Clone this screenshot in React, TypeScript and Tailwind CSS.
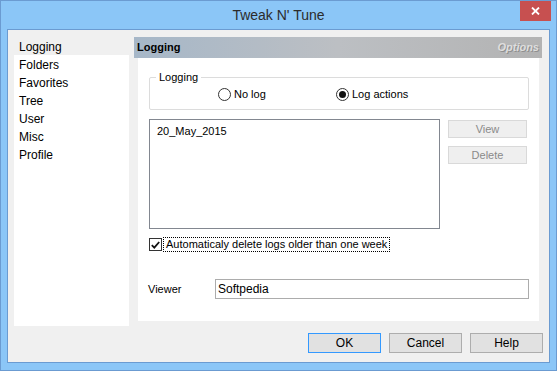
import React from 'react';

const menu = ['Logging', 'Folders', 'Favorites', 'Tree', 'User', 'Misc', 'Profile'];

const Radio: React.FC<{ checked?: boolean; label: string }> = ({ checked, label }) => (
  <div className="flex items-center gap-[3px]">
    <div className="w-[13px] h-[13px] rounded-full border border-[#333] bg-white flex items-center justify-center">
      {checked && <div className="w-[7px] h-[7px] rounded-full bg-[#111]" />}
    </div>
    <span>{label}</span>
  </div>
);

const DialogButton: React.FC<{ label: string; primary?: boolean }> = ({ label, primary }) => (
  <div
    className={`w-[73px] h-[20px] flex items-center justify-center bg-[#e1e1e1] border text-[12px] text-black ${
      primary ? 'border-[#3399ff]' : 'border-[#adadad]'
    }`}
  >
    {label}
  </div>
);

export default function App() {
  return (
    <div
      className="w-[557px] h-[371px] bg-[#8bc6f7] border border-[#6b9bd1] flex flex-col"
      style={{ fontFamily: '"Liberation Sans", Arial, sans-serif' }}
    >
      {/* title bar */}
      <div className="relative h-[28px] flex items-center justify-center">
        <span className="text-[14px] text-[#2b2b2b] pt-[1px]">Tweak N' Tune</span>
        <div className="absolute right-[5px] top-0 w-[31px] h-[20px] bg-[#c75050] flex items-center justify-center">
          <svg width="9" height="8" viewBox="0 0 9 8">
            <path d="M1 0.5 L8 7.5 M8 0.5 L1 7.5" stroke="white" strokeWidth="1.8" />
          </svg>
        </div>
      </div>

      {/* client area */}
      <div className="ml-[6px] w-[543px] h-[334px] border border-[#6b9bd1] bg-[#f0f0f0] flex flex-col">
        <div className="flex pt-[7px] pl-[6px] gap-[5px]">
          {/* side list */}
          <div className="w-[115px] h-[289px] bg-white flex flex-col text-[12px] text-black">
            {menu.map((m, i) => (
              <div key={m} className={`h-[18px] flex items-center pl-[5px] pt-[2px] ${i === 0 ? 'bg-[#f0f0f0]' : ''}`}>
                {m}
              </div>
            ))}
          </div>

          {/* page panel */}
          <div className="w-[408px] h-[284px] flex flex-col">
            <div className="h-[21px] bg-gradient-to-r from-[#a6b7c8] via-[#bcbfc3] to-[#b3b3b3] flex items-center justify-between px-[3px]">
              <span className="text-[11px] font-bold text-black">Logging</span>
              <span className="text-[11px] font-bold italic text-[#dedede] [text-shadow:1px_1px_0_#8f8f8f]">Options</span>
            </div>
            <div className="flex-1 bg-white ml-[4px] mr-[3px] pt-[19px] pl-[11px] text-[11px] text-black">
              {/* group box */}
              <div className="relative w-[380px] h-[33px] border border-[#dcdcdc] rounded-[2px]">
                <span className="absolute -top-[8px] left-[6px] bg-white px-[3px] leading-[14px]">Logging</span>
                <div className="absolute left-[68px] top-[8px]">
                  <Radio label="No log" />
                </div>
                <div className="absolute left-[186px] top-[8px]">
                  <Radio checked label="Log actions" />
                </div>
              </div>

              {/* log list + actions */}
              <div className="flex gap-[8px] mt-[9px]">
                <div className="w-[291px] h-[110px] border border-[#828790] pl-[7px] pt-[3px]">20_May_2015</div>
                <div className="flex flex-col gap-[8px] pt-[1px]">
                  <div className="w-[79px] h-[18px] bg-[#efefef] border border-[#d9d9d9] text-[#8a8a8a] flex items-center justify-center">View</div>
                  <div className="w-[79px] h-[18px] bg-[#efefef] border border-[#d9d9d9] text-[#8a8a8a] flex items-center justify-center">Delete</div>
                </div>
              </div>

              {/* auto delete */}
              <div className="flex items-center mt-[8px] h-[15px]">
                <div className="w-[13px] h-[13px] border border-[#333] bg-white flex items-center justify-center">
                  <svg width="9" height="8" viewBox="0 0 9 8">
                    <path d="M0.8 4.2 L3.3 6.6 L8.2 1" stroke="#111" strokeWidth="1.8" fill="none" />
                  </svg>
                </div>
                <span className="ml-[1px] border border-dotted border-black px-[2px] leading-[13px]">
                  Automaticaly delete logs older than one week
                </span>
              </div>

              {/* viewer */}
              <div className="flex items-center mt-[27px] -ml-[1px]">
                <span className="w-[67px]">Viewer</span>
                <div className="w-[314px] h-[20px] border border-[#acacac] flex items-center pl-[2px] text-[12px]">
                  Softpedia
                </div>
              </div>
            </div>
          </div>
        </div>

        {/* dialog buttons */}
        <div className="flex justify-end gap-[8px] pr-[6px] mt-[7px]">
          <DialogButton label="OK" primary />
          <DialogButton label="Cancel" />
          <DialogButton label="Help" />
        </div>
      </div>
    </div>
  );
}
